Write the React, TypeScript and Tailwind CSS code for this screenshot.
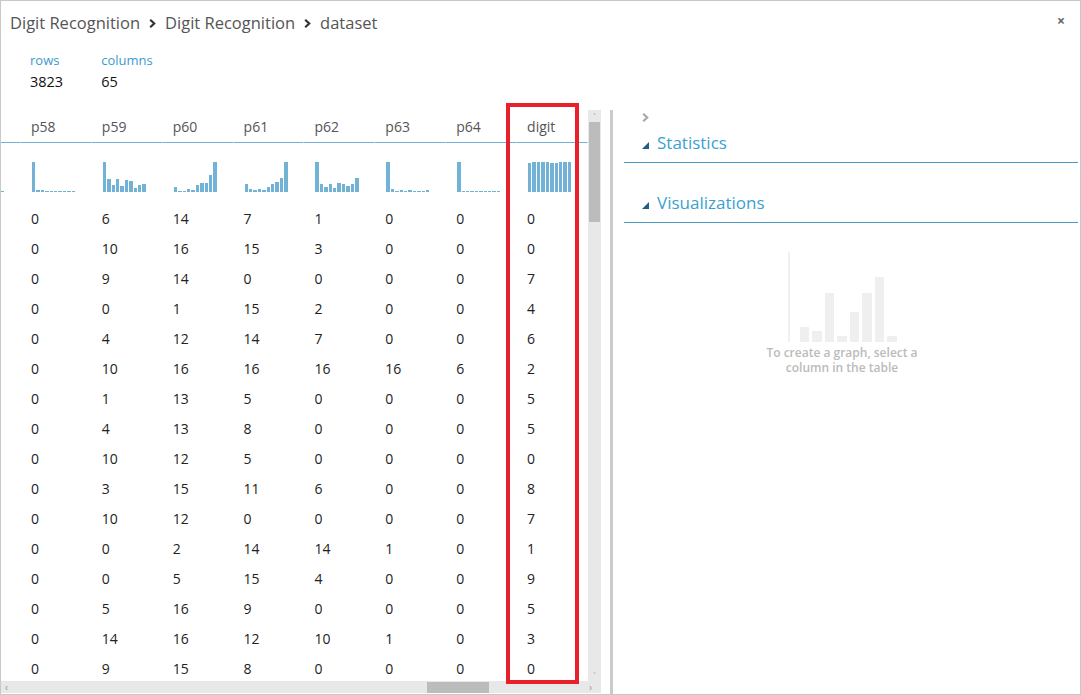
import React from 'react';

const COLS = ['p58', 'p59', 'p60', 'p61', 'p62', 'p63', 'p64', 'digit'];

// histogram bar heights, px out of 30
const HISTS: number[][] = [
  [30, 2, 2, 1, 1, 1, 1, 1, 1, 1],
  [30, 13, 7, 13, 6, 12, 11, 4, 7, 8],
  [5, 1.5, 1.5, 3, 2, 7, 9, 9, 17, 30],
  [8, 3, 2, 3, 2, 5, 8, 10, 14, 30],
  [30, 8, 5, 8, 4, 9, 8, 6, 8, 14],
  [30, 3, 1.5, 2, 1.5, 2, 1, 1, 1, 2],
  [30, 1, 1, 1, 1, 1, 1, 1, 1, 1],
  [29, 30, 30, 30, 30, 29, 29, 30, 30, 30],
];

const ROWS = [
  [0, 6, 14, 7, 1, 0, 0, 0],
  [0, 10, 16, 15, 3, 0, 0, 0],
  [0, 9, 14, 0, 0, 0, 0, 7],
  [0, 0, 1, 15, 2, 0, 0, 4],
  [0, 4, 12, 14, 7, 0, 0, 6],
  [0, 10, 16, 16, 16, 16, 6, 2],
  [0, 1, 13, 5, 0, 0, 0, 5],
  [0, 4, 13, 8, 0, 0, 0, 5],
  [0, 10, 12, 5, 0, 0, 0, 0],
  [0, 3, 15, 11, 6, 0, 0, 8],
  [0, 10, 12, 0, 0, 0, 0, 7],
  [0, 0, 2, 14, 14, 1, 0, 1],
  [0, 0, 5, 15, 4, 0, 0, 9],
  [0, 5, 16, 9, 0, 0, 0, 5],
  [0, 14, 16, 12, 10, 1, 0, 3],
  [0, 9, 15, 8, 0, 0, 0, 0],
];

// empty-state chart bars
const PLACEHOLDER = [15, 11, 49, 6, 30, 49, 65, 6];

function Chevron({ color, className }: { color: string; className?: string }) {
  return (
    <svg width="7" height="9" viewBox="0 0 7 9" className={className}>
      <path d="M1.2 0.8 L5.2 4.5 L1.2 8.2" fill="none" stroke={color} strokeWidth="2.2" />
    </svg>
  );
}

function Histogram({ bars }: { bars: number[] }) {
  return (
    <div className="flex h-[30px] w-[43px] items-end gap-px">
      {bars.map((h, i) => (
        <div key={i} className="flex-1 bg-[#72b2d6]" style={{ height: `${h}px` }} />
      ))}
    </div>
  );
}

function Table() {
  return (
    <div className="relative flex w-[600px] flex-col">
      <div className="flex h-[571px]">
        <div className="w-[587px] overflow-hidden">
          {/* header */}
          <div className="flex h-[33px]">
            <div className="w-[20px] border-b border-[#72b2d6] border-r border-r-white" />
            {COLS.map(c => (
              <div
                key={c}
                className="flex w-[71px] items-center border-b border-r border-b-[#72b2d6] border-r-white pl-[10px] text-[14px] text-[#555]"
              >
                {c}
              </div>
            ))}
          </div>
          {/* histograms */}
          <div className="flex h-[60px]">
            <div className="flex w-[20px] items-end pb-[11px]">
              <div className="h-px w-[3px] bg-[#72b2d6]" />
            </div>
            {HISTS.map((b, i) => (
              <div key={i} className="flex w-[71px] items-end pb-[11px] pl-[11px]">
                <Histogram bars={b} />
              </div>
            ))}
          </div>
          {ROWS.map((r, i) => (
            <div key={i} className="flex h-[30px] items-center text-[14px] text-[#222]">
              <div className="w-[20px]" />
              {r.map((v, j) => (
                <div key={j} className="w-[71px] pl-[10px]">{v}</div>
              ))}
            </div>
          ))}
        </div>
        {/* vertical scrollbar */}
        <div className="flex w-[13px] flex-col bg-[#e8e8e8]">
          <div className="flex h-[12px] items-center justify-center text-[9px] leading-none text-[#999]">˄</div>
          <div className="mx-px h-[100px] bg-[#bcbcbc]" />
          <div className="flex-1" />
          <div className="flex h-[12px] items-center justify-center text-[9px] leading-none text-[#999]">˅</div>
        </div>
      </div>
      {/* horizontal scrollbar */}
      <div className="flex h-[12px] items-center bg-[#e8e8e8]">
        <div className="w-[12px] pl-[4px] text-[10px] leading-none text-[#999]">‹</div>
        <div className="w-[414px]" />
        <div className="h-[11px] w-[62px] bg-[#bcbcbc]" />
        <div className="flex-1" />
        <div className="w-[12px] text-[10px] leading-none text-[#999]">›</div>
      </div>
      {/* annotation box */}
      <div className="pointer-events-none absolute left-[505px] top-[-7px] h-[581px] w-[73px] border-4 border-[#e8202a]" />
    </div>
  );
}

function Section({ title }: { title: string }) {
  return (
    <div className="flex h-[38px] items-center gap-[8px] border-b border-[#4a9cc4] pl-[17px] pb-[2px]">
      <svg width="8" height="8" viewBox="0 0 8 8" className="mt-[5px]">
        <path d="M8 1 L8 8 L1 8 Z" fill="#1f5f85" />
      </svg>
      <span className="text-[17px] text-[#3c9fd0]">{title}</span>
    </div>
  );
}

function SidePanel() {
  return (
    <div className="flex flex-1 flex-col pl-[11px] pr-[2px]">
      <div className="h-[15px] pl-[18px] pt-[3px]">
        <Chevron color="#a8a8a8" />
      </div>
      <Section title="Statistics" />
      <div className="h-[22px]" />
      <Section title="Visualizations" />
      <div className="flex flex-col items-center pr-[18px] pt-[29px]">
        <div className="flex h-[90px] items-end gap-[3px] border-l-2 border-[#f0f0f0] pl-[10px]">
          {PLACEHOLDER.map((h, i) => (
            <div key={i} className="w-[9.5px] bg-[#efefef]" style={{ height: `${h}px` }} />
          ))}
        </div>
        <div className="mt-[3px] text-center text-[12px] font-semibold leading-[15px] text-[#bbb]">
          To create a graph, select a<br />column in the table
        </div>
      </div>
    </div>
  );
}

export default function App() {
  return (
    <div
      className="flex h-[695px] w-[1081px] flex-col overflow-hidden border border-[#c8c8c8] bg-white"
      style={{ fontFamily: '"Open Sans", "Noto Sans", sans-serif' }}
    >
      <div className="relative h-[108px] shrink-0">
        <div className="flex items-center pl-[9px] pt-[10px] text-[16.5px] text-[#555]">
          <span>Digit Recognition</span>
          <Chevron color="#333" className="mx-[9px] mt-[1px]" />
          <span>Digit Recognition</span>
          <Chevron color="#333" className="mx-[9px] mt-[1px]" />
          <span>dataset</span>
        </div>
        <div className="mt-[16px] flex gap-[38px] pl-[29px]">
          <div className="flex flex-col">
            <span className="text-[13px] leading-[17px] text-[#3a9bd0]">rows</span>
            <span className="mt-[3px] text-[14.5px] leading-[20px] text-[#111]">3823</span>
          </div>
          <div className="flex flex-col">
            <span className="text-[13px] leading-[17px] text-[#3a9bd0]">columns</span>
            <span className="mt-[3px] text-[14.5px] leading-[20px] text-[#111]">65</span>
          </div>
        </div>
        <div className="absolute right-[15px] top-[9px] text-[14px] font-bold text-[#666]">×</div>
      </div>
      <div className="flex flex-1 pt-[1px]">
        <Table />
        <div className="ml-[9px] w-[3px] bg-[#cbcbcb]" />
        <SidePanel />
      </div>
    </div>
  );
}
